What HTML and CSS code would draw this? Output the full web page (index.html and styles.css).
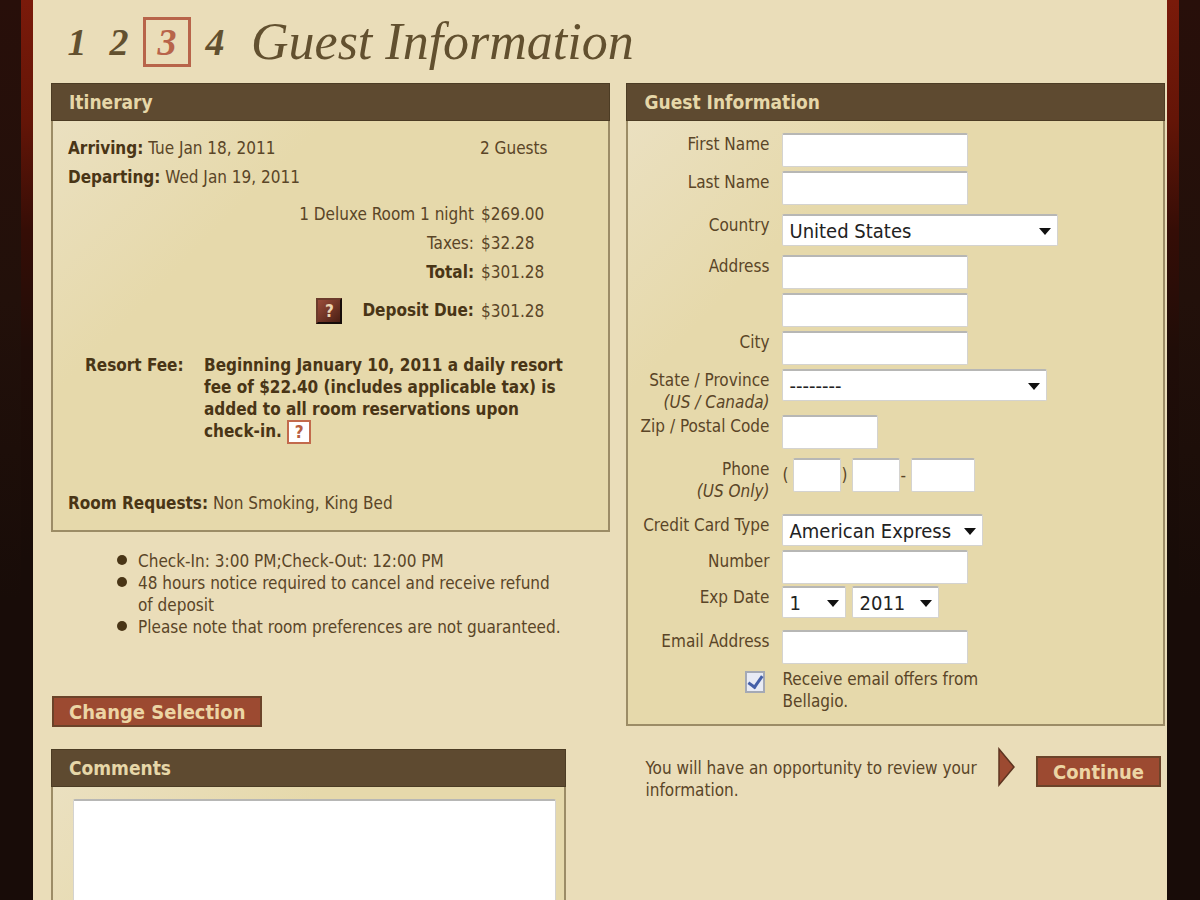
FILE: index.html
```html
<!DOCTYPE html>
<html lang="en">
<head>
    <meta charset="UTF-8">
    <meta name="viewport" content="width=device-width, initial-scale=1.0">
    <title>Guest Information</title>
    <link rel="stylesheet" href="styles.css">
</head>
<body>

<div class="frame">
<div class="page">

    <div class="title">
        <ol class="steps">
            <li>1</li>
            <li>2</li>
            <li class="current">3</li>
            <li>4</li>
        </ol>
        <h1>Guest Information</h1>
    </div>

    <form class="columns">
        <div class="left">
            <div class="panel itinerary">
                <h2>Itinerary</h2>
                <div class="panel-body">
                    <div class="dates">
                        <p><b>Arriving:</b> Tue Jan 18, 2011</p>
                        <p class="guests">2 Guests</p>
                        <p><b>Departing:</b> Wed Jan 19, 2011</p>
                    </div>
                    <table class="prices">
                        <tr><td>1 Deluxe Room 1 night</td><td>$269.00</td></tr>
                        <tr><td>Taxes:</td><td>$32.28</td></tr>
                        <tr><th>Total:</th><td>$301.28</td></tr>
                        <tr class="deposit">
                            <th><button type="button" class="help help-dark">?</button>Deposit Due:</th>
                            <td>$301.28</td>
                        </tr>
                    </table>
                    <div class="fee">
                        <p>Resort Fee:</p>
                        <p>Beginning January 10, 2011 a daily resort fee of $22.40 (includes applicable tax) is added to all room reservations upon check-in. <button type="button" class="help help-light">?</button></p>
                    </div>
                    <p class="requests"><b>Room Requests:</b> Non Smoking, King Bed</p>
                </div>
            </div>

            <ul class="notes">
                <li>Check-In: 3:00 PM;Check-Out: 12:00 PM</li>
                <li>48 hours notice required to cancel and receive refund of deposit</li>
                <li>Please note that room preferences are not guaranteed.</li>
            </ul>

            <button type="button" class="btn change">Change Selection</button>

            <div class="panel comments">
                <h2><label for="comments">Comments</label></h2>
                <div class="comments-body">
                    <textarea id="comments" rows="6"></textarea>
                </div>
            </div>
        </div>

        <div class="right">
            <div class="panel">
                <h2>Guest Information</h2>
                <div class="fields">
                    <div class="row">
                        <label for="first">First Name</label>
                        <input type="text" id="first">
                    </div>
                    <div class="row roomy">
                        <label for="last">Last Name</label>
                        <input type="text" id="last">
                    </div>
                    <div class="row roomy">
                        <label for="country">Country</label>
                        <span class="select country"><select id="country"><option>United States</option><option>Canada</option></select></span>
                    </div>
                    <div class="row">
                        <label for="address">Address</label>
                        <input type="text" id="address">
                    </div>
                    <div class="row">
                        <span></span>
                        <input type="text" aria-label="Address line 2">
                    </div>
                    <div class="row">
                        <label for="city">City</label>
                        <input type="text" id="city">
                    </div>
                    <div class="row tight">
                        <label for="state">State / Province <i>(US / Canada)</i></label>
                        <span class="select state"><select id="state"><option>--------</option></select></span>
                    </div>
                    <div class="row roomy">
                        <label for="zip">Zip / Postal Code</label>
                        <input type="text" id="zip" class="zip">
                    </div>
                    <div class="row loose">
                        <label for="area">Phone <i>(US Only)</i></label>
                        <div class="phone">
                            <span>(</span><input type="text" id="area" class="short"><span>)</span>
                            <input type="text" class="short" aria-label="Phone prefix"><span>-</span>
                            <input type="text" class="line" aria-label="Phone number">
                        </div>
                    </div>
                    <div class="row">
                        <label for="card">Credit Card Type</label>
                        <span class="select card"><select id="card"><option>American Express</option><option>Visa</option></select></span>
                    </div>
                    <div class="row tight">
                        <label for="number">Number</label>
                        <input type="text" id="number">
                    </div>
                    <div class="row loose">
                        <label for="month">Exp Date</label>
                        <div class="expiry">
                            <span class="select month"><select id="month"><option>1</option><option>2</option></select></span>
                            <span class="select year"><select aria-label="Expiry year"><option>2011</option><option>2012</option></select></span>
                        </div>
                    </div>
                    <div class="row">
                        <label for="email">Email Address</label>
                        <input type="text" id="email">
                    </div>
                    <div class="row">
                        <input type="checkbox" id="offers" checked>
                        <label for="offers" class="offers">Receive email offers from Bellagio.</label>
                    </div>
                </div>
            </div>

            <div class="next">
                <p>You will have an opportunity to review your information.</p>
                <svg class="arrow" width="18" height="40" viewBox="0 0 18 40"><path d="M1 2 L16 20 L1 38 Z" fill="#9c4a31" stroke="#5d3420" stroke-width="1.5"/></svg>
                <button type="submit" class="btn">Continue</button>
            </div>
        </div>
    </form>

</div>
</div>

</body>
</html>
```

FILE: styles.css
```css
* {
    box-sizing: border-box;
}
body {
    margin: 0;
    background: linear-gradient(#280f0a, #22100a 300px, #180c08 600px);
    color: #5a4527;
    font-family: Tahoma, "DejaVu Sans Condensed", "DejaVu Sans", sans-serif;
    font-size: 17px;
    line-height: 22px;
}
h1, h2, p, ol, ul {
    margin: 0;
    padding: 0;
}
b, th {
    color: #493516;
}
/* red wood edge on both sides of the page */
.frame {
    margin: 0 21px;
    padding: 0 12px;
    background: linear-gradient(#7a1a0a, #641507 120px, #350d06 230px, #200d08 350px, #180c08 560px);
}
.page {
    min-height: 100vh;
    padding: 0 2px 40px 18px;
    background: #eaddb9;
}
.title {
    display: flex;
    align-items: center;
    height: 83px;
    padding-left: 8px;
    color: #62502f;
    font-family: "Liberation Serif", serif;
    font-style: italic;
}
.steps {
    display: flex;
    align-items: center;
    list-style: none;
    font-size: 38px;
    font-weight: bold;
}
.steps li {
    width: 48px;
    line-height: 44px;
    text-align: center;
}
.steps .current {
    border: 3px solid #b8644a;
    color: #b8644a;
}
.steps li:first-child {
    width: 36px;
}
h1 {
    margin-left: 12px;
    font-size: 52px;
    font-weight: normal;
    line-height: 60px;
}
.columns {
    display: grid;
    grid-template-columns: 560fr 539fr;
    gap: 16px;
    align-items: start;
}
.panel {
    border: 2px solid #9c8c66;
    border-top: 0;
    background: linear-gradient(135deg, #ebe1c3, #e6d9ab 220px);
}
.panel h2 {
    margin: 0 -2px;
    padding: 0 17px;
    border: 1px solid #4c3c24;
    background: #5e4a30;
    color: #e6d7a8;
    font-size: 19px;
    line-height: 36px;
}
.panel-body {
    padding: 16px 15px;
}
.dates {
    display: grid;
    grid-template-columns: 412px 1fr;
    row-gap: 7px;
}
.prices {
    width: 100%;
    margin-top: 12px;
    border-collapse: collapse;
}
.prices td, .prices th {
    padding: 3px 0 4px 7px;
    text-align: left;
}
.prices td:first-child, .prices th {
    width: 406px;
    text-align: right;
}
.prices .deposit td, .prices .deposit th {
    padding-top: 12px;
}
.help {
    width: 26px;
    height: 26px;
    padding: 0;
    font-family: inherit;
    font-size: 17px;
    font-weight: bold;
    line-height: 20px;
    vertical-align: middle;
}
.help-dark {
    margin: -2px 20px -2px 0;
    border: 2px outset #6b3b2b;
    background: linear-gradient(135deg, #9a4c3a, #4a1f14);
    color: #ecd3b0;
}
.help-light {
    width: 24px;
    height: 24px;
    margin: -2px 0;
    border: 2px solid #c26a4c;
    background: #fff;
    color: #b75e40;
}
.fee {
    display: grid;
    grid-template-columns: 119px 1fr;
    margin: 28px 17px 0;
    color: #493516;
    font-weight: bold;
}
.requests {
    margin-top: 50px;
}
.notes {
    margin: 18px 46px 0 66px;
    list-style: none;
}
.notes li {
    display: flex;
    gap: 11px;
}
/* round bullets */
.notes li::before {
    content: "";
    flex: none;
    width: 10px;
    height: 10px;
    margin-top: 5px;
    border-radius: 50%;
    background: #493516;
}
.btn {
    height: 31px;
    padding: 0 15px;
    border: 2px solid #6b4329;
    background: #9c4a31;
    color: #ecd5a4;
    font-family: inherit;
    font-size: 20px;
    font-weight: bold;
    line-height: 26px;
    white-space: nowrap;
}
.change {
    display: block;
    margin: 58px 0 22px 1px;
}
.comments {
    width: 92%;
}
.comments-body {
    padding: 12px 8px 12px 20px;
}
.fields {
    padding: 12px 0 8px 10px;
}
.row {
    display: grid;
    grid-template-columns: 131px 1fr;
    column-gap: 13px;
    align-items: start;
    justify-items: start;
    margin-bottom: 4px;
}
.row.tight {
    margin-bottom: 2px;
}
.row.roomy {
    margin-bottom: 9px;
}
.row.loose {
    margin-bottom: 12px;
}
.row label {
    justify-self: end;
    text-align: right;
}
.row label i {
    display: block;
}
input[type="text"], textarea, select {
    border: 1px solid #d4d3d0;
    border-top: 2px solid #b7b7b5;
    border-radius: 2px;
    background: #fff;
    color: #222;
    font-family: inherit;
    font-size: 20px;
}
input[type="text"] {
    width: 186px;
    height: 34px;
}
textarea {
    display: block;
    width: 100%;
    height: 160px;
    resize: none;
}
select {
    display: block;
    width: 100%;
    height: 32px;
    padding: 0 6px;
    appearance: none;
}
.select {
    position: relative;
}
/* drop-down triangle */
.select::after {
    content: "";
    position: absolute;
    top: 14px;
    right: 7px;
    border: 6px solid transparent;
    border-top: 7px solid #111;
    border-bottom: 0;
    pointer-events: none;
}
.country {
    width: 276px;
}
.state {
    width: 265px;
}
.card {
    width: 201px;
}
.month {
    width: 64px;
}
.year {
    width: 87px;
}
input.zip {
    width: 96px;
}
.phone, .expiry {
    display: flex;
    align-items: center;
}
.expiry {
    gap: 6px;
}
.phone span {
    width: 11px;
}
input.short {
    width: 48px;
}
input.line {
    width: 64px;
}
#offers {
    appearance: none;
    justify-self: end;
    width: 20px;
    height: 22px;
    margin: 3px 4px 0 0;
    border: 2px solid #a4a9b5;
    background: #e8ebf5;
}
/* tick */
#offers::after {
    content: "";
    display: block;
    width: 6px;
    height: 12px;
    margin: 0 auto;
    border: solid #4560a8;
    border-width: 0 3px 3px 0;
    transform: rotate(35deg);
}
.row .offers {
    justify-self: start;
    max-width: 210px;
    text-align: left;
}
.next {
    display: flex;
    align-items: start;
    padding: 21px 4px 0 19px;
}
.next p {
    flex: 1;
    padding-top: 10px;
}
.next .btn {
    margin-top: 9px;
}
.arrow {
    flex: none;
    margin: 0 20px 0 14px;
}
```
